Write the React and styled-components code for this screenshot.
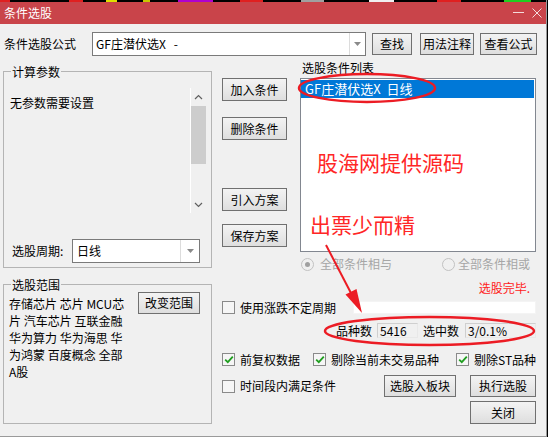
import React from 'react';
import styled, { createGlobalStyle } from 'styled-components';

const Global = createGlobalStyle`
  html, body { margin: 0; padding: 0; background: #000; }
  body { font-family: "Noto Sans CJK SC", "Microsoft YaHei", sans-serif; font-size: 12px; }
  * { box-sizing: border-box; }
`;

const Window = styled.div`
  position: relative;
  width: 547px;
  height: 437px;
  background: #f0f0f0;
  border-right: 1px solid #9a9a9a;
  border-bottom: 1px solid #9a9a9a;
  display: flex;
  flex-direction: column;
  color: #000;
  font-size: 12px;
  line-height: 16px;
  overflow: hidden;
`;

const TopStrip = styled.div`
  height: 2px;
  flex: none;
  background: linear-gradient(to right,
    #e02020 0 10px, #000 10px 69px, #e02020 69px 83px, #000 83px 106px,
    #e0e000 106px 117px, #000 117px 143px, #c8c800 143px 150px, #000 150px 178px,
    #b000d0 178px 213px, #000 213px 240px, #e02020 240px 263px, #000 263px 301px,
    #a0a0a0 301px 324px, #000 324px 369px, #f0f0f0 369px 394px, #000 394px 437px,
    #e02020 437px 461px, #000 461px 504px, #20d020 504px 531px, #000 531px);
`;

const TitleBar = styled.div`
  height: 22px;
  flex: none;
  background: #c9444a;
  color: #fff;
  display: flex;
  align-items: center;
  padding-left: 4px;
`;

const TitleText = styled.span`
  flex: 1;
  line-height: 22px;
`;

const TitleButton = styled.span`
  width: ${p => p.$w}px;
  height: 22px;
  display: flex;
  align-items: center;
  justify-content: center;
`;

const Body = styled.div`
  flex: 1;
  padding-top: 8px;
  display: flex;
  flex-direction: column;
`;

const FormulaRow = styled.div`
  height: 24px;
  display: flex;
  align-items: center;
  padding-left: 4px;
`;

const RowLabel = styled.span`
  width: ${p => p.$w}px;
  margin-left: ${p => p.$ml || 0}px;
  flex: none;
  white-space: nowrap;
`;

const Combo = styled.div`
  width: ${p => p.$w}px;
  height: 24px;
  flex: none;
  background: #fff;
  border: 1px solid #7a7a7a;
  display: flex;
  align-items: center;
`;

const ComboText = styled.span`
  flex: 1;
  padding-left: ${p => p.$pl || 3}px;
  white-space: pre;
`;

const ComboArrow = styled.span`
  width: ${p => p.$w}px;
  align-self: stretch;
  border-left: 1px solid #dcdcdc;
  display: flex;
  align-items: center;
  justify-content: center;
`;

const Button = styled.button`
  width: ${p => p.$w}px;
  height: ${p => p.$h || 23}px;
  margin-left: ${p => p.$ml || 0}px;
  margin-top: ${p => p.$mt || 0}px;
  flex: none;
  padding: 0;
  font: inherit;
  font-size: 12px;
  color: #000;
  background: linear-gradient(#f3f3f3, #e9e9e9 50%, #dedede);
  border: 1px solid #707070;
  border-radius: 0;
  display: flex;
  align-items: center;
  justify-content: center;
  white-space: nowrap;
`;

const Main = styled.div`
  display: flex;
  align-items: flex-start;
`;

const LeftCol = styled.div`
  margin-left: 3px;
  width: 209px;
  display: flex;
  flex-direction: column;
`;

const GroupBox = styled.div`
  position: relative;
  margin-top: ${p => p.$mt}px;
  height: ${p => p.$h}px;
  border: 1px solid #b4b4b4;
  display: flex;
  flex-direction: ${p => p.$dir || 'column'};
  align-items: flex-start;
`;

const Legend = styled.span`
  position: absolute;
  top: -8px;
  left: 7px;
  padding: 0 1px;
  background: #f0f0f0;
  line-height: 16px;
`;

const ParamRow = styled.div`
  margin-top: 16px;
  height: 125px;
  display: flex;
`;

const ParamText = styled.div`
  width: 180px;
  margin-left: 6px;
  padding-top: 7px;
`;

const Scrollbar = styled.div`
  width: 16px;
  border-left: 1px solid #fff;
  display: flex;
  flex-direction: column;
`;

const ScrollBtn = styled.div`
  height: 17px;
  display: flex;
  align-items: center;
  justify-content: center;
`;

const Thumb = styled.div`
  margin-top: 1px;
  height: 58px;
  background: #cdcdcd;
`;

const Spacer = styled.div`
  flex: 1;
`;

const PeriodRow = styled.div`
  margin-top: 26px;
  height: 24px;
  display: flex;
  align-items: center;
  padding-left: 6px;
`;

const RangeText = styled.div`
  width: 124px;
  margin-left: 5px;
  padding-top: 10px;
  line-height: 17px;
`;

const RangeLine = styled.div`
  white-space: nowrap;
`;

const RightArea = styled.div`
  margin-left: 10px;
  width: 314px;
  display: flex;
  flex-direction: column;
`;

const TopPart = styled.div`
  display: flex;
`;

const BtnCol = styled.div`
  width: 65px;
  padding-top: 22px;
  display: flex;
  flex-direction: column;
`;

const ListCol = styled.div`
  margin-left: 13px;
  width: 236px;
  display: flex;
  flex-direction: column;
`;

const ListLabel = styled.div`
  margin-top: 4px;
  line-height: 16px;
  padding-left: 2px;
`;

const ListBox = styled.div`
  margin-top: 2px;
  height: 174px;
  background: #fff;
  border: 1px solid #828790;
  padding: 1px 1px 0 0;
`;

const ListRow = styled.div`
  height: 18px;
  line-height: 18px;
  background: ${p => (p.$selected ? '#0078d7' : 'transparent')};
  color: ${p => (p.$selected ? '#fff' : '#000')};
  padding-left: 4px;
  font-size: 13px;
  white-space: pre;
`;

const RadioRow = styled.div`
  margin-top: 5px;
  height: 14px;
  display: flex;
  align-items: center;
  padding-left: 1px;
`;

const RadioItem = styled.span`
  display: flex;
  align-items: center;
  width: ${p => (p.$w ? `${p.$w}px` : 'auto')};
  color: #a6a6a6;
`;

const RadioCircle = styled.span`
  width: 13px;
  height: 13px;
  border-radius: 50%;
  border: 1px solid #c2c2c2;
  background: #f0f0f0;
  display: flex;
  align-items: center;
  justify-content: center;
  flex: none;
`;

const RadioDot = styled.span`
  width: 5px;
  height: 5px;
  border-radius: 50%;
  background: #a0a0a0;
`;

const RadioText = styled.span`
  margin-left: ${p => p.$ml}px;
  white-space: nowrap;
`;

const StatusLine = styled.div`
  margin-top: 10px;
  height: 14px;
  line-height: 14px;
  text-align: right;
  padding-right: 6px;
  color: #ff1a1a;
`;

const FlexRow = styled.div`
  margin-top: ${p => p.$mt}px;
  height: ${p => p.$h}px;
  display: flex;
  align-items: center;
  justify-content: ${p => p.$justify || 'flex-start'};
`;

const CheckItem = styled.span`
  display: flex;
  align-items: center;
  width: ${p => (p.$w ? `${p.$w}px` : 'auto')};
  flex: none;
  white-space: nowrap;
`;

const CheckBox = styled.span`
  width: 13px;
  height: 13px;
  flex: none;
  border: 1px solid #8a8a8a;
  background: #f6f6f6;
  display: flex;
  align-items: center;
  justify-content: center;
`;

const CheckText = styled.span`
  margin-left: 5px;
`;

const PlainInput = styled.div`
  margin-left: auto;
  width: 183px;
  height: 13px;
  background: #fff;
  border: 1px solid #f4f4f4;
`;

const StatLabel = styled.span`
  margin-left: ${p => p.$ml || 0}px;
  white-space: nowrap;
`;

const StatBox = styled.span`
  margin-left: ${p => p.$ml || 0}px;
  width: ${p => p.$w}px;
  height: 15px;
  line-height: 13px;
  border: 1px solid #cfcfcf;
  border-right-color: #e8e8e8;
  border-bottom-color: #e8e8e8;
  background: #f0f0f0;
  padding-left: 2px;
  white-space: nowrap;
`;

const Overlay = styled.svg`
  position: absolute;
  top: 0;
  left: 0;
  pointer-events: none;
`;

const Annotation = styled.span`
  position: absolute;
  left: ${p => p.$x}px;
  top: ${p => p.$y}px;
  font-size: 21px;
  line-height: 24px;
  color: #ff2626;
  white-space: nowrap;
  pointer-events: none;
`;

const DownTri = () => (
  <svg width="7" height="4" viewBox="0 0 7 4">
    <polygon points="0,0 7,0 3.5,4" fill="#8a8a8a" />
  </svg>
);

const Chevron = ({ up }) => (
  <svg width="9" height="6" viewBox="0 0 9 6">
    <polyline
      points={up ? '1,5 4.5,1.5 8,5' : '1,1 4.5,4.5 8,1'}
      fill="none"
      stroke="#606060"
      strokeWidth="1.2"
    />
  </svg>
);

const Check = ({ checked, children, w }) => (
  <CheckItem $w={w}>
    <CheckBox>
      {checked && (
        <svg width="10" height="9" viewBox="0 0 10 9">
          <polyline points="1.2,4.6 3.8,7.2 8.8,1.6" fill="none" stroke="#1f9e1f" strokeWidth="1.8" />
        </svg>
      )}
    </CheckBox>
    <CheckText>{children}</CheckText>
  </CheckItem>
);

const rangeLines = ['存储芯片 芯片 MCU芯', '片 汽车芯片 互联金融', '华为算力 华为海思 华', '为鸿蒙 百度概念 全部', 'A股'];

export default function App() {
  return (
    <>
      <Global />
      <Window>
        <TopStrip />
        <TitleBar>
          <TitleText>条件选股</TitleText>
          <TitleButton $w={20}>
            <svg width="11" height="2" viewBox="0 0 11 2">
              <rect x="0" y="0" width="11" height="1" fill="#f4dcdc" />
            </svg>
          </TitleButton>
          <TitleButton $w={18}>
            <svg width="10" height="10" viewBox="0 0 10 10">
              <path d="M0.5 0.5 L9.5 9.5 M9.5 0.5 L0.5 9.5" stroke="#f4dcdc" strokeWidth="1" />
            </svg>
          </TitleButton>
        </TitleBar>
        <Body>
          <FormulaRow>
            <RowLabel $w={88}>条件选股公式</RowLabel>
            <Combo $w={274}>
              <ComboText $pl={3}>{'GF庄潜伏选X   -'}</ComboText>
              <ComboArrow $w={16}>
                <DownTri />
              </ComboArrow>
            </Combo>
            <Button $w={40} $h={22} $ml={6}>查找</Button>
            <Button $w={54} $h={22} $ml={8}>用法注释</Button>
            <Button $w={57} $h={22} $ml={6}>查看公式</Button>
          </FormulaRow>
          <Main>
            <LeftCol>
              <GroupBox $mt={15} $h={197}>
                <Legend>计算参数</Legend>
                <ParamRow>
                  <ParamText>无参数需要设置</ParamText>
                  <Scrollbar>
                    <ScrollBtn>
                      <Chevron up />
                    </ScrollBtn>
                    <Thumb />
                    <Spacer />
                    <ScrollBtn>
                      <Chevron />
                    </ScrollBtn>
                  </Scrollbar>
                </ParamRow>
                <PeriodRow>
                  <RowLabel $w={60} $ml={2}>选股周期:</RowLabel>
                  <Combo $w={128}>
                    <ComboText $pl={4}>日线</ComboText>
                    <ComboArrow $w={19}>
                      <DownTri />
                    </ComboArrow>
                  </Combo>
                </PeriodRow>
              </GroupBox>
              <GroupBox $mt={16} $h={140} $dir="row">
                <Legend>选股范围</Legend>
                <RangeText>
                  {rangeLines.map(l => (
                    <RangeLine key={l}>{l}</RangeLine>
                  ))}
                </RangeText>
                <Button $w={62} $h={22} $ml={5} $mt={7}>改变范围</Button>
              </GroupBox>
            </LeftCol>
            <RightArea>
              <TopPart>
                <BtnCol>
                  <Button $w={65}>加入条件</Button>
                  <Button $w={65} $mt={16}>删除条件</Button>
                  <Button $w={65} $mt={48}>引入方案</Button>
                  <Button $w={65} $mt={13}>保存方案</Button>
                </BtnCol>
                <ListCol>
                  <ListLabel>选股条件列表</ListLabel>
                  <ListBox>
                    <ListRow $selected>{'GF庄潜伏选X  日线'}</ListRow>
                  </ListBox>
                  <RadioRow>
                    <RadioItem $w={141}>
                      <RadioCircle>
                        <RadioDot />
                      </RadioCircle>
                      <RadioText $ml={6}>全部条件相与</RadioText>
                    </RadioItem>
                    <RadioItem>
                      <RadioCircle />
                      <RadioText $ml={3}>全部条件相或</RadioText>
                    </RadioItem>
                  </RadioRow>
                </ListCol>
              </TopPart>
              <StatusLine>选股完毕.</StatusLine>
              <FlexRow $mt={6} $h={13}>
                <Check>使用涨跌不定周期</Check>
                <PlainInput />
              </FlexRow>
              <FlexRow $mt={9} $h={15} $justify="flex-end">
                <StatLabel>品种数</StatLabel>
                <StatBox $w={41} $ml={5}>5416</StatBox>
                <StatLabel $ml={5}>选中数</StatLabel>
                <StatBox $w={71} $ml={6}>3/0.1%</StatBox>
              </FlexRow>
              <FlexRow $mt={15} $h={13}>
                <Check checked w={91}>前复权数据</Check>
                <Check checked w={143}>剔除当前未交易品种</Check>
                <Check checked>剔除ST品种</Check>
              </FlexRow>
              <FlexRow $mt={9} $h={22}>
                <Check>时间段内满足条件</Check>
                <Button $w={72} $h={22} style={{ marginLeft: 'auto' }}>选股入板块</Button>
                <Button $w={66} $h={22} $ml={14}>执行选股</Button>
              </FlexRow>
              <FlexRow $mt={4} $h={23} $justify="flex-end">
                <Button $w={66}>关闭</Button>
              </FlexRow>
            </RightArea>
          </Main>
        </Body>
        <Annotation $x={317} $y={150}>股海网提供源码</Annotation>
        <Annotation $x={310} $y={212}>出票少而精</Annotation>
        <Overlay width="547" height="437" viewBox="0 0 547 437">
          <ellipse cx="367" cy="88" rx="68" ry="14" fill="none" stroke="#ec1c24" strokeWidth="2.5" />
          <ellipse cx="429.5" cy="331" rx="104.5" ry="14" fill="none" stroke="#ec1c24" strokeWidth="2.5" />
          <line x1="326" y1="245" x2="352" y2="295" stroke="#ec1c24" strokeWidth="2" />
          <polygon points="362,313 345.5,294.5 356.5,289" fill="#ec1c24" />
        </Overlay>
      </Window>
    </>
  );
}
